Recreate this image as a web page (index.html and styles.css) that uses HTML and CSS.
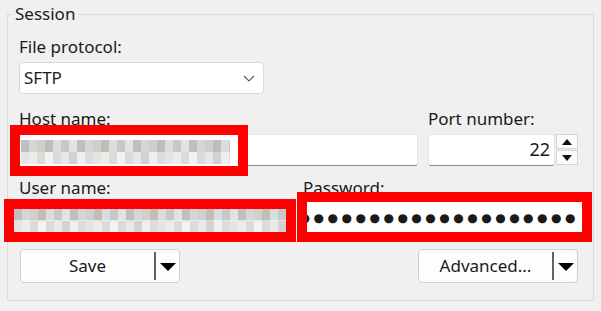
FILE: index.html
```html
<!DOCTYPE html>
<html lang="en">
  <head>
    <meta charset="UTF-8" />
    <title>Session</title>
    <link rel="stylesheet" href="styles.css">
  </head>
  <body>
    <div class="session">
      <span class="legend">Session</span>

      <div class="field">
        <label>File protocol:</label>
        <div class="combo">
          <span>SFTP</span>
          <svg width="12" height="7" viewBox="0 0 12 7">
            <polyline points="1,1 6,6 11,1" fill="none" stroke="#5c5c5c" stroke-width="1.1" />
          </svg>
        </div>
      </div>

      <div class="row host-row">
        <div class="field grow">
          <label>Host name:</label>
          <div class="input"></div>
        </div>
        <div class="field port">
          <label>Port number:</label>
          <div class="spin">
            <div class="input num">22</div>
            <div class="spin-btns">
              <div class="spin-btn"><span class="tri up"></span></div>
              <div class="spin-btn"><span class="tri down"></span></div>
            </div>
          </div>
        </div>
      </div>

      <div class="row user-row">
        <div class="field user">
          <label>User name:</label>
          <div class="input"></div>
        </div>
        <div class="field grow">
          <label>Password:</label>
          <div class="input"></div>
        </div>
      </div>

      <div class="buttons">
        <div class="button">
          <span class="button-text">Save</span>
          <span class="split"></span>
          <span class="drop"></span>
        </div>
        <div class="button">
          <span class="button-text">Advanced...</span>
          <span class="split"></span>
          <span class="drop"></span>
        </div>
      </div>
    </div>

    <!-- redaction boxes drawn over the screenshot -->
    <div class="redact redact-host"><div class="mosaic"></div></div>
    <div class="redact redact-user"><div class="mosaic"></div></div>
    <div class="redact redact-pass">
      <div class="dots"><span>●●●●●●●●●●●●●●●●●●●●●●●●●●●●●●</span></div>
    </div>
  </body>
</html>
```

FILE: styles.css
```css
/* Basic styling */
body {
  font-family: "Noto Sans", "DejaVu Sans", sans-serif;
  font-size: 17px;
  line-height: 20px;
  color: #1a1a1a;
  background-color: #f0f0f0;
  margin: 0;
  padding: 0;
  width: 601px;
  height: 311px;
  overflow: hidden;
  position: relative;
}
.session {
  position: relative;
  margin: 14px 7px 0;
  padding: 22px 15px 17px 11px;
  border: 1px solid #dcdcdc;
}
.legend {
  position: absolute;
  top: -11px;
  left: 4px;
  padding: 0 3px;
  background-color: #f0f0f0;
}
.field {
  display: flex;
  flex-direction: column;
  gap: 5px;
}
.field label {
  display: block;
  height: 20px;
}
.combo {
  width: 245px;
  height: 32px;
  box-sizing: border-box;
  background-color: #fff;
  border: 1px solid #d9d9d9;
  border-radius: 4px;
  display: flex;
  align-items: center;
  justify-content: space-between;
  padding: 0 8px 1px 4px;
}
.combo svg {
  margin-top: 2px;
}
.row {
  display: flex;
}
.host-row {
  margin-top: 15px;
  gap: 10px;
}
.user-row {
  margin-top: 12px;
  gap: 18px;
}
.grow {
  flex: 1;
}
.port {
  width: 150px;
}
.user {
  width: 266px;
}
.input {
  height: 32px;
  box-sizing: border-box;
  background-color: #fff;
  border: 1px solid #e5e5e5;
  border-bottom-color: #8a8a8a;
  border-radius: 3px;
}
.spin {
  display: flex;
  gap: 1px;
}
.num {
  flex: 1;
  text-align: right;
  padding: 4px 4px 0 0;
  font-size: 18px;
}
.spin-btns {
  width: 22px;
  height: 31px;
  display: flex;
  flex-direction: column;
  gap: 1px;
}
.spin-btn {
  flex: 1;
  background-color: #fbfbfb;
  border: 1px solid #d4d4d4;
  display: flex;
  align-items: center;
  justify-content: center;
}
.tri {
  width: 0;
  height: 0;
  border-left: 5px solid transparent;
  border-right: 5px solid transparent;
}
.tri.up {
  border-bottom: 6px solid #111;
}
.tri.down {
  border-top: 6px solid #111;
}
.buttons {
  display: flex;
  justify-content: space-between;
  margin-top: 14px;
  padding-left: 1px;
}
.button {
  width: 160px;
  height: 34px;
  box-sizing: border-box;
  background-color: #fdfdfd;
  border: 1px solid #d0d0d0;
  border-radius: 4px;
  display: flex;
  align-items: center;
}
.button-text {
  flex: 1;
  text-align: center;
  padding-bottom: 1px;
}
.split {
  width: 2px;
  height: 28px;
  background-color: #62626c;
}
.drop {
  width: 0;
  height: 0;
  margin: 1px 3px 0 4px;
  border-left: 8px solid transparent;
  border-right: 8px solid transparent;
  border-top: 8px solid #000;
}

/* red annotation boxes */
.redact {
  position: absolute;
  border: 10px solid #ff0000;
  background-color: #fff;
}
.redact-host {
  left: 10px;
  top: 125px;
  width: 218px;
  height: 31px;
}
.redact-host .mosaic {
  width: 209px;
  height: 24px;
  margin: 5px 0 0 1px;
}
.redact-user {
  left: 4px;
  top: 199px;
  width: 272px;
  height: 23px;
}
.redact-user .mosaic {
  height: 23px;
}
.redact-pass {
  left: 297px;
  top: 192px;
  width: 275px;
  height: 30px;
}
.mosaic {
  background-image:
    repeating-linear-gradient(90deg, #bfbfbf 0 8px, #d6d6d6 8px 16px, #cfcfcf 16px 24px, #c3bcb4 24px 32px, #d9dde0 32px 40px, #c8c8c8 40px 48px, #e2e2e2 48px 56px),
    repeating-linear-gradient(90deg, #e4e4e4 0 8px, #ececec 8px 16px, #dedad6 16px 24px, #f2f2f2 24px 32px, #d8dce0 32px 40px, #e8e8e8 40px 48px, #d2d2d2 48px 56px, #eeeeee 56px 64px, #dcdcdc 64px 72px);
  background-size: 100% 50%;
  background-position: top, bottom;
  background-repeat: no-repeat;
}
.dots {
  height: 30px;
  display: flex;
  justify-content: flex-end;
  align-items: center;
  overflow: hidden;
  padding-right: 3px;
}
.dots span {
  font-family: "DejaVu Sans", sans-serif;
  font-size: 12px;
  letter-spacing: 3.5px;
  white-space: nowrap;
  padding-top: 2px;
}
```
